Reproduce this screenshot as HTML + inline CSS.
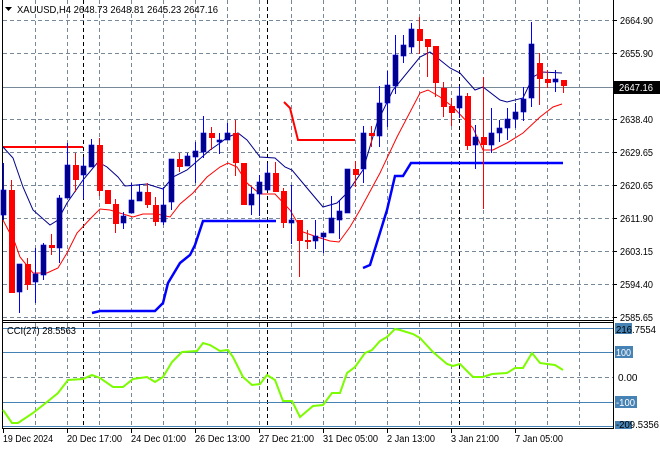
<!DOCTYPE html>
<html><head><meta charset="utf-8"><style>
html,body{margin:0;padding:0;background:#fff;}
svg{display:block;font-family:"Liberation Sans",Tahoma,sans-serif;font-size:10px;}
</style></head><body>
<svg width="660" height="450" viewBox="0 0 660 450" xmlns="http://www.w3.org/2000/svg">
<rect width="660" height="450" fill="#fff"/>
<g stroke="#778899" stroke-width="1" stroke-dasharray="4,3" fill="none">
<path d="M3 20.5H613M3 53.5H613M3 119.5H613M3 152.5H613M3 185.5H613M3 218.5H613M3 251.5H613M3 284.5H613M3 317.5H613"/>
<path d="M35.5 0V320M67.5 0V320M99.5 0V320M131.5 0V320M163.5 0V320M195.5 0V320M227.5 0V320M259.5 0V320M291.5 0V320M323.5 0V320M355.5 0V320M387.5 0V320M419.5 0V320M451.5 0V320M483.5 0V320M515.5 0V320M547.5 0V320M579.5 0V320"/>
<path d="M35.5 323V428M67.5 323V428M99.5 323V428M131.5 323V428M163.5 323V428M195.5 323V428M227.5 323V428M259.5 323V428M291.5 323V428M323.5 323V428M355.5 323V428M387.5 323V428M419.5 323V428M451.5 323V428M483.5 323V428M515.5 323V428M547.5 323V428M579.5 323V428"/>
<path d="M3 377.5H613"/>
</g>
<g stroke="#000" stroke-width="1" stroke-dasharray="4,3"><path d="M83.5 0V320M267.5 0V320M459.5 0V320M83.5 323V428M267.5 323V428M459.5 323V428"/></g>
<path d="M3 87.5H613" stroke="#778899"/>
<g stroke="#4682b4" stroke-width="1"><path d="M3 328.5H613M3 352.5H613M3 402.5H613M3 426.5H613"/></g>
<g stroke="#000" fill="none"><path d="M2.5 0V428.5H613.5V0M2.5 320.5H613.5M2.5 322.5H613.5"/></g>
<path d="M3 147H83" stroke="#f00" stroke-width="2" fill="none"/>
<path d="M284 102L290 108L298 140H355" stroke="#f00" stroke-width="2" fill="none"/>
<path d="M92 313L100 311H155L163 303L168 283L180 263L190 255L195 245L203 221H276" stroke="#0000ff" stroke-width="2.5" fill="none"/>
<path d="M363 268L370 265L387 210L395 176H403L411 163H563" stroke="#0000ff" stroke-width="2.5" fill="none"/>
<polyline fill="none" stroke="#00008b" stroke-width="1" points="3,147 13,158 23,187 33,210 50,225 58,220 67,203 83,180 98,162 107,167 118,177 125,186 147,184 163,189 173,177 187,170 210,150 220,143 228,137 238,133 247,140 260,157 275,158 285,167 292,170 307,188 323,207 337,203 347,193 363,170 377,123 393,90 420,57 430,52 450,68 460,73 475,90 483,87 500,100 507,102 523,98 533,77 542,72 562,73"/>
<polyline fill="none" stroke="#f00" stroke-width="1" points="3,220 15,243 20,257 33,273 47,273 58,268 67,253 77,233 92,217 100,209 110,210 133,217 143,214 157,214 170,217 180,204 193,193 207,177 220,167 228,163 237,167 247,183 260,194 275,194 290,210 303,232 317,237 330,241 339,242 350,227 360,210 380,173 397,137 420,93 428,90 440,97 453,107 473,128 483,150 493,150 507,143 523,133 540,117 553,107 562,104"/>
<g stroke-width="1">
<g stroke="#0000ff"><path d="M3.5 163V220M19.5 264V313M35.5 248V303M43.5 243V280M59.5 195V263M67.5 143V198M83.5 157V199M91.5 139V167M123.5 212V229M131.5 183V213M139.5 184V201M163.5 187V225M171.5 159V210M187.5 153V166M195.5 142V183M203.5 116V158M219.5 133V154M227.5 123V140M251.5 187V215M259.5 175V216M267.5 163V190M291.5 185V244M315.5 220V249M323.5 233V253M331.5 196V233M339.5 200V239M347.5 169V213M363.5 126V183M379.5 86V147M387.5 71V127M395.5 35V94M403.5 35V63M411.5 23V53M459.5 86V118M475.5 125V169M491.5 108V153M499.5 120V142M507.5 108V140M515.5 103V128M523.5 87V121M531.5 22V107M555.5 70V92"/></g>
<g stroke="#f00"><path d="M11.5 180V293M27.5 258V290M51.5 234V255M75.5 153V192M99.5 138V196M107.5 190V204M115.5 199V233M147.5 183V208M155.5 197V226M179.5 153V172M211.5 127V150M235.5 120V176M243.5 163V205M275.5 162V192M283.5 188V228M299.5 220V277M307.5 230V249M355.5 161V187M371.5 126V147M419.5 17V54M427.5 39V77M435.5 46V97M443.5 82V117M451.5 98V126M467.5 93V150M483.5 77V209M539.5 53V105M547.5 70V88M563.5 80V93"/></g>
</g>
<g fill="#00008b" stroke="#0000cd" stroke-width="0.6">
<rect x="1" y="190" width="5" height="25"/><rect x="17" y="264" width="5" height="28"/><rect x="33" y="274" width="5" height="8"/><rect x="41" y="245" width="5" height="30"/><rect x="57" y="198" width="5" height="50"/><rect x="65" y="165" width="5" height="33"/><rect x="81" y="166" width="5" height="9"/><rect x="89" y="145" width="5" height="22"/><rect x="121" y="216" width="5" height="7"/><rect x="129" y="200" width="5" height="13"/><rect x="137" y="192" width="5" height="9"/><rect x="161" y="205" width="5" height="17"/><rect x="169" y="159" width="5" height="43"/><rect x="185" y="156" width="5" height="10"/><rect x="193" y="151" width="5" height="6"/><rect x="201" y="133" width="5" height="19"/><rect x="217" y="140" width="5" height="2"/><rect x="225" y="133" width="5" height="7"/><rect x="249" y="194" width="5" height="11"/><rect x="257" y="182" width="5" height="12"/><rect x="265" y="173" width="5" height="17"/><rect x="289" y="220" width="5" height="3"/><rect x="313" y="236" width="5" height="5"/><rect x="321" y="233" width="5" height="4"/><rect x="329" y="218" width="5" height="15"/><rect x="337" y="211" width="5" height="9"/><rect x="345" y="169" width="5" height="44"/><rect x="361" y="133" width="5" height="36"/><rect x="377" y="103" width="5" height="33"/><rect x="385" y="85" width="5" height="18"/><rect x="393" y="55" width="5" height="31"/><rect x="401" y="45" width="5" height="11"/><rect x="409" y="29" width="5" height="18"/><rect x="457" y="96" width="5" height="12"/><rect x="473" y="137" width="5" height="8"/><rect x="489" y="133" width="5" height="12"/><rect x="497" y="128" width="5" height="5"/><rect x="505" y="119" width="5" height="9"/><rect x="513" y="112" width="5" height="7"/><rect x="521" y="99" width="5" height="13"/><rect x="529" y="44" width="5" height="54"/><rect x="553" y="79" width="5" height="3"/>
</g>
<g fill="#f00">
<rect x="9" y="190" width="6" height="103"/><rect x="25" y="264" width="6" height="21"/><rect x="49" y="245" width="6" height="3"/><rect x="73" y="165" width="6" height="15"/><rect x="97" y="145" width="6" height="46"/><rect x="105" y="190" width="6" height="14"/><rect x="113" y="204" width="6" height="20"/><rect x="145" y="192" width="6" height="13"/><rect x="153" y="205" width="6" height="17"/><rect x="177" y="159" width="6" height="8"/><rect x="209" y="133" width="6" height="5"/><rect x="233" y="133" width="6" height="30"/><rect x="241" y="163" width="6" height="42"/><rect x="273" y="173" width="6" height="19"/><rect x="281" y="191" width="6" height="32"/><rect x="297" y="220" width="6" height="21"/><rect x="305" y="240" width="6" height="2"/><rect x="353" y="169" width="6" height="6"/><rect x="369" y="133" width="6" height="3"/><rect x="417" y="29" width="6" height="12"/><rect x="425" y="39" width="6" height="8"/><rect x="433" y="46" width="6" height="37"/><rect x="441" y="88" width="6" height="19"/><rect x="449" y="106" width="6" height="7"/><rect x="465" y="96" width="6" height="50"/><rect x="481" y="137" width="6" height="8"/><rect x="537" y="63" width="6" height="16"/><rect x="545" y="79" width="6" height="4"/><rect x="561" y="80" width="6" height="6"/>
</g>
<polyline fill="none" stroke="#7cfc00" stroke-width="2" points="3,410 12,423 18,423 33,413 47,402 58,393 68,380 83,379 92,375 100,378 113,387 123,387 133,379 147,377 155,382 163,377 172,362 182,352 197,351 203,343 210,345 220,351 228,350 233,357 243,377 252,385 260,384 267,375 275,380 283,401 292,401 300,417 313,406 323,405 332,393 340,393 347,373 355,367 365,353 372,350 380,341 387,337 395,329 400,330 413,334 420,338 433,352 447,364 453,366 460,364 473,377 483,377 492,374 507,373 515,368 523,368 532,353 540,363 547,364 555,365 563,370"/>
<path d="M5 7H12L8.5 11Z" fill="#000"/>
<text x="17" y="13" fill="#000" textLength="201" lengthAdjust="spacingAndGlyphs">XAUUSD,H4  2648.73 2648.81 2645.23 2647.16</text>
<text x="7" y="334" fill="#000" textLength="69" lengthAdjust="spacingAndGlyphs">CCI(27) 28.5563</text>
<g fill="#000">
<path d="M613 20.5h4M613 53.5h4M613 119.5h4M613 152.5h4M613 185.5h4M613 218.5h4M613 251.5h4M613 284.5h4M613 317.5h4" stroke="#000"/>
<text x="620" y="24" textLength="33" lengthAdjust="spacingAndGlyphs">2664.90</text><text x="620" y="57" textLength="33" lengthAdjust="spacingAndGlyphs">2655.90</text><text x="620" y="123" textLength="33" lengthAdjust="spacingAndGlyphs">2638.40</text><text x="620" y="156" textLength="33" lengthAdjust="spacingAndGlyphs">2629.65</text><text x="620" y="189" textLength="33" lengthAdjust="spacingAndGlyphs">2620.65</text><text x="620" y="222" textLength="33" lengthAdjust="spacingAndGlyphs">2611.90</text><text x="620" y="255" textLength="33" lengthAdjust="spacingAndGlyphs">2603.15</text><text x="620" y="288" textLength="33" lengthAdjust="spacingAndGlyphs">2594.40</text><text x="620" y="321" textLength="33" lengthAdjust="spacingAndGlyphs">2585.65</text>
</g>
<rect x="614" y="81" width="46" height="13" fill="#000"/>
<text x="619" y="91" fill="#fff" textLength="34" lengthAdjust="spacingAndGlyphs">2647.16</text>
<rect x="615" y="323" width="17" height="11" fill="#4682b4"/>
<text x="616" y="333" fill="#000" textLength="40" lengthAdjust="spacingAndGlyphs">216.7554</text>
<rect x="615" y="346" width="18" height="12" fill="#4682b4"/><text x="616" y="356" fill="#fff" textLength="15" lengthAdjust="spacingAndGlyphs">100</text>
<text x="618" y="381" fill="#000">0.00</text>
<rect x="615" y="396" width="22" height="12" fill="#4682b4"/><text x="616" y="406" fill="#fff" textLength="19" lengthAdjust="spacingAndGlyphs">-100</text>
<rect x="615" y="421" width="17" height="8" fill="#4682b4"/>
<text x="616" y="428" fill="#000" textLength="43" lengthAdjust="spacingAndGlyphs">-209.5356</text>
<g stroke="#000"><path d="M3.5 428V433M67.5 428V433M131.5 428V433M195.5 428V433M259.5 428V433M323.5 428V433M387.5 428V433M451.5 428V433M515.5 428V433"/></g>
<g fill="#000">
<text x="3" y="442" textLength="50" lengthAdjust="spacingAndGlyphs">19 Dec 2024</text><text x="67" y="442" textLength="55" lengthAdjust="spacingAndGlyphs">20 Dec 17:00</text><text x="131" y="442" textLength="55" lengthAdjust="spacingAndGlyphs">24 Dec 01:00</text><text x="195" y="442" textLength="55" lengthAdjust="spacingAndGlyphs">26 Dec 13:00</text><text x="259" y="442" textLength="55" lengthAdjust="spacingAndGlyphs">27 Dec 21:00</text><text x="323" y="442" textLength="55" lengthAdjust="spacingAndGlyphs">31 Dec 05:00</text><text x="387" y="442" textLength="48" lengthAdjust="spacingAndGlyphs">2 Jan 13:00</text><text x="451" y="442" textLength="48" lengthAdjust="spacingAndGlyphs">3 Jan 21:00</text><text x="515" y="442" textLength="48" lengthAdjust="spacingAndGlyphs">7 Jan 05:00</text>
</g>
</svg>
</body></html>
